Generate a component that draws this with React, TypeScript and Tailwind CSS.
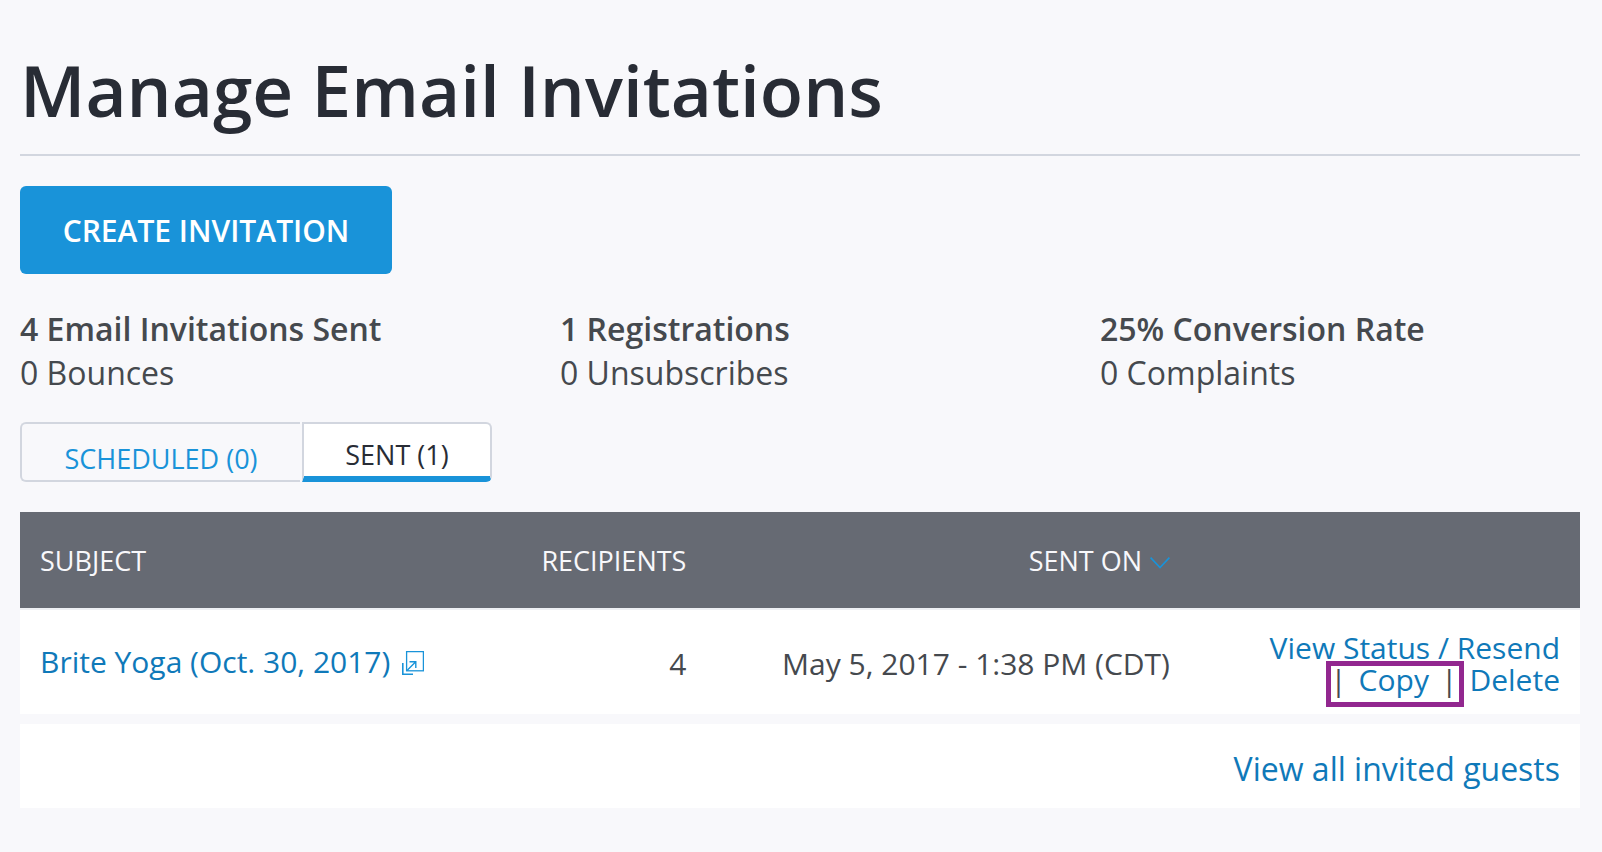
const stats = [
  { title: "4 Email Invitations Sent", detail: "0 Bounces" },
  { title: "1 Registrations", detail: "0 Unsubscribes" },
  { title: "25% Conversion Rate", detail: "0 Complaints" },
];

function ChevronDown() {
  return (
    <svg className="ml-2 inline-block h-3 w-5 align-[2px]" viewBox="0 0 20 12" fill="none" stroke="#1993d9" strokeWidth="1.6" aria-hidden="true">
      <path d="M0.6 0.6 L10 10.6 L19.4 0.6" />
    </svg>
  );
}

function PopOutIcon() {
  return (
    <svg className="ml-3 inline-block h-6 w-[22px] align-[-2px]" viewBox="0 0 22 24" fill="none" stroke="#1993d9" aria-hidden="true">
      <rect x="4.6" y="0.6" width="16.8" height="19.2" strokeWidth="1.3" />
      <path d="M0.8 12V23.2H11" strokeWidth="1.6" />
      <path d="M5 19.5 L13.5 11 M7.5 10.7H13.8V17" strokeWidth="1.4" />
    </svg>
  );
}

export default function App() {
  return (
    <div className="min-h-screen bg-[#f8f8fb] pt-[46px] pr-[22px] pb-11 pl-5 font-['Open_Sans',sans-serif] text-[#45494e]">
      <header className="border-b-2 border-[#d2d6df] pb-5">
        <h1 className="text-[71px] leading-[88px] font-semibold text-[#282c35]">Manage Email Invitations</h1>
      </header>

      <button type="button" className="mt-[30px] block h-[88px] min-w-[372px] rounded-md bg-[#1993d9] px-10 text-[30px] font-semibold text-white">
        CREATE INVITATION
      </button>

      <section className="mt-[33px] grid grid-cols-3 gap-[60px] text-[32px] leading-[44px]" aria-label="Statistics">
        {stats.map((s) => (
          <div key={s.title} className="whitespace-nowrap">
            <h2 className="font-semibold">{s.title}</h2>
            <p>{s.detail}</p>
          </div>
        ))}
      </section>

      <div role="tablist" className="mt-[27px] flex h-[60px] gap-0.5 text-[27px]">
        <button type="button" role="tab" aria-selected="false" className="w-[280px] rounded-l-md border-2 border-r-0 border-[#d2d6df] pt-3.5 text-[#1993d9]">
          SCHEDULED (0)
        </button>
        <button type="button" role="tab" aria-selected="true" className="w-[190px] rounded-r-md border-2 border-b-6 border-[#d2d6df] border-b-[#1993d9] bg-white pt-2.5 text-[#282c35]">
          SENT (1)
        </button>
      </div>

      <table className="mt-[30px] w-full table-fixed text-[30px] leading-8">
        <thead className="border-b-2 border-[#eef0f4] bg-[#666a73] text-[27px] text-[#f8f8fb]">
          <tr className="h-[97px]">
            <th className="w-[31%] px-5 pt-0.5 text-left font-normal">SUBJECT</th>
            <th className="w-[13%] px-5 pt-0.5 text-right font-normal">RECIPIENTS</th>
            <th className="w-[31%] px-5 pt-0.5 text-right font-normal whitespace-nowrap">
              SENT ON
              <ChevronDown />
            </th>
            <th className="w-[25%]" aria-label="Actions" />
          </tr>
        </thead>
        <tbody className="bg-white">
          <tr className="h-[105px]">
            <td className="px-5 whitespace-nowrap">
              <a href="#event" className="text-[#0f79b9]">
                Brite Yoga (Oct. 30, 2017)
                <PopOutIcon />
              </a>
            </td>
            <td className="px-5 pt-1 text-right">4</td>
            <td className="px-5 pt-1 text-right whitespace-nowrap">May 5, 2017 - 1:38 PM (CDT)</td>
            <td className="px-5 pt-1 text-right whitespace-nowrap">
              <a href="#status" className="text-[#0f79b9]">View Status / Resend</a>
              <div className="flex justify-end gap-3">
                <div className="relative flex gap-3">
                  <span>|</span>
                  <a href="#copy" className="text-[#0f79b9]">Copy</a>
                  <span>|</span>
                  <div className="pointer-events-none absolute -top-[3px] -right-[7px] -bottom-[11px] -left-1 border-5 border-[#92278f]" />
                </div>
                <a href="#delete" className="text-[#0f79b9]">Delete</a>
              </div>
            </td>
          </tr>
        </tbody>
      </table>

      <div className="mt-2.5 flex h-21 items-center justify-end bg-white px-5 pt-1.5 text-[32px]">
        <a href="#guests" className="text-[#0f79b9]">View all invited guests</a>
      </div>
    </div>
  );
}
